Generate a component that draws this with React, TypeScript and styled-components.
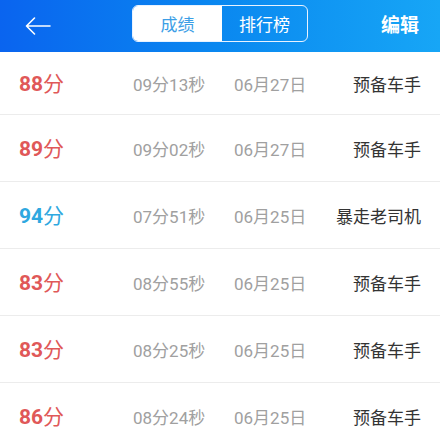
import React, { useState } from "react";
import styled, { createGlobalStyle } from "styled-components";

interface Record {
  score: number;
  time: string;
  date: string;
  title: string;
}

const records: Record[] = [
  { score: 88, time: "09分13秒", date: "06月27日", title: "预备车手" },
  { score: 89, time: "09分02秒", date: "06月27日", title: "预备车手" },
  { score: 94, time: "07分51秒", date: "06月25日", title: "暴走老司机" },
  { score: 83, time: "08分55秒", date: "06月25日", title: "预备车手" },
  { score: 83, time: "08分25秒", date: "06月25日", title: "预备车手" },
  { score: 86, time: "08分24秒", date: "06月25日", title: "预备车手" },
];

const App = () => {
  const [tab, setTab] = useState(0);

  return (
    <>
      <GlobalStyle />
      <Page>
        <Header>
          <BackBtn type="button">
            <svg width="26" height="18" viewBox="0 0 26 18" fill="none">
              <path
                d="M25 9H1.5M9.5 1L1.5 9l8 8"
                stroke="#fff"
                strokeWidth="1.6"
                strokeLinecap="round"
                strokeLinejoin="round"
              />
            </svg>
          </BackBtn>
          <Tabs>
            <TabBtn active={tab === 0} onClick={() => setTab(0)}>
              成绩
            </TabBtn>
            <TabBtn active={tab === 1} onClick={() => setTab(1)}>
              排行榜
            </TabBtn>
          </Tabs>
          <EditBtn>编辑</EditBtn>
        </Header>
        <List>
          {records.map((r, i) => (
            <Row key={i}>
              <Score high={r.score >= 90}>
                {r.score}
                <span>分</span>
              </Score>
              <Meta>{r.time}</Meta>
              <Meta>{r.date}</Meta>
              <Title>{r.title}</Title>
            </Row>
          ))}
        </List>
      </Page>
    </>
  );
};

const GlobalStyle = createGlobalStyle`
  body {
    margin: 0;
    background: #fff;
    font-family: Roboto, "Noto Sans CJK SC", sans-serif;
  }
`;

const Page = styled.div`
  width: 440px;
  height: 440px;
  overflow: hidden;
  background: #fff;
`;

const Header = styled.div`
  height: 52px;
  display: grid;
  grid-template-columns: 132px 176px 1fr;
  align-items: center;
  background: linear-gradient(90deg, #0a64ef 0%, #0a88f0 50%, #17a6f6 100%);
`;

const BackBtn = styled.button`
  background: transparent;
  border: none;
  padding: 0 0 0 25px;
  display: flex;
  align-items: center;
  justify-self: start;
  cursor: pointer;
`;

const Tabs = styled.div`
  display: grid;
  grid-template-columns: 89px 1fr;
  height: 37px;
  margin-bottom: 5px;
  border: 1px solid #e8f2ff;
  border-radius: 6px;
  overflow: hidden;
  box-sizing: border-box;
`;

const TabBtn = styled.div<{ active: boolean }>`
  display: flex;
  align-items: center;
  justify-content: center;
  font-size: 17px;
  cursor: pointer;
  background: ${(props) => (props.active ? "#fff" : "transparent")};
  color: ${(props) => (props.active ? "#3b9ee6" : "#fff")};
`;

const EditBtn = styled.div`
  justify-self: end;
  padding: 0 21px 6px 0;
  color: #fff;
  font-size: 19px;
  font-weight: 700;
`;

const List = styled.div`
  display: flex;
  flex-direction: column;
`;

const Row = styled.div`
  height: 67px;
  flex-shrink: 0;
  display: grid;
  grid-template-columns: 114px 101px 1fr auto;
  align-items: center;
  padding: 0 19px;
  border-bottom: 1px solid #ececec;
  box-sizing: border-box;

  &:first-child {
    height: 63px;
  }
`;

const Score = styled.div<{ high: boolean }>`
  font-size: 21px;
  font-weight: 700;
  color: ${(props) => (props.high ? "#2fa8e0" : "#e05858")};
  padding-bottom: 2px;

  & > span {
    font-weight: 400;
  }
`;

const Meta = styled.div`
  font-size: 17px;
  color: #a0a0a0;
`;

const Title = styled.div`
  font-size: 17px;
  color: #333;
  text-align: right;
`;

export default App;
